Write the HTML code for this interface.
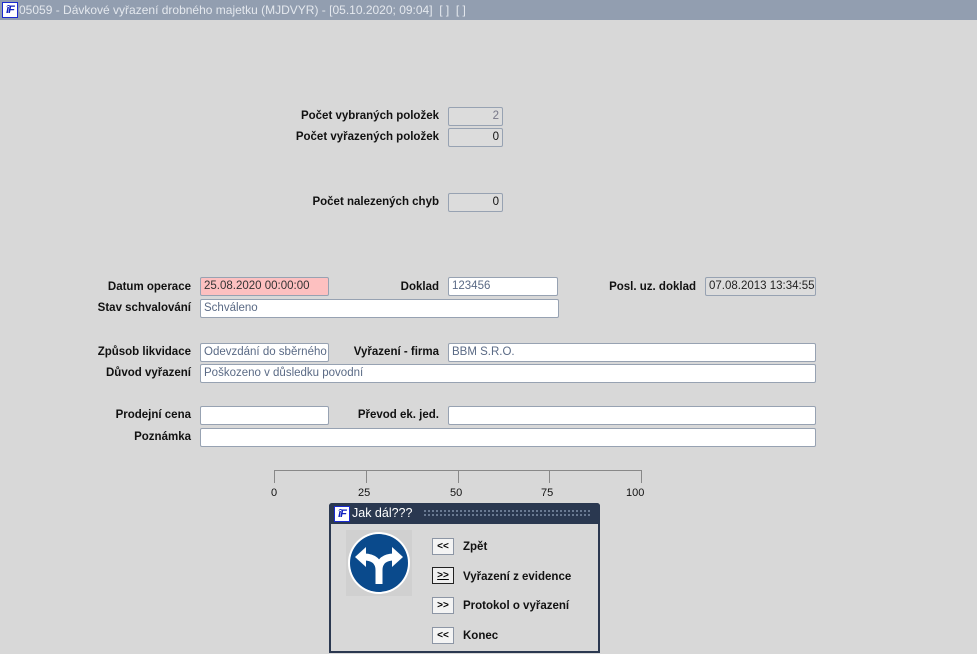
<!DOCTYPE html>
<html><head><meta charset="utf-8"><style>
body{margin:0;width:977px;height:654px;background:#d8d8d8;font-family:"Liberation Sans",Arial,sans-serif;position:relative;overflow:hidden}
.t{position:absolute;left:0;top:0;width:977px;height:20px;background:#929eb0;color:#e4e8ee;font-size:12px;line-height:20px}
.logo{position:absolute;width:14px;height:14px;background:#fff;border:1px solid #1a2ad0;color:#1020c0;font-weight:bold;font-style:italic;font-size:11px;line-height:14px;text-align:center;letter-spacing:-1px}
.l{position:absolute;font-size:11.5px;font-weight:bold;color:#111;text-align:right;line-height:18px}
.i{position:absolute;box-sizing:border-box;height:19px;border:1px solid #97a2b2;border-radius:2px;background:#fff;font-size:11.5px;line-height:17px;padding:0 3px;color:#5a6a85;white-space:nowrap;overflow:hidden}
.g{background:#dcdcdc;color:#111;text-align:right}
.n{position:absolute;font-size:11px;color:#111}
.b{position:absolute;left:432px;width:22px;height:17px;box-sizing:border-box;border:1px solid #8d96a5;background:#f4f4f4;font-size:10px;font-weight:bold;text-align:center;line-height:15px}
.bl{position:absolute;left:463px;font-size:11.5px;font-weight:bold;color:#111}
</style></head><body>
<div class="t"><div class="logo" style="left:2px;top:2px">îF</div><span style="position:absolute;left:19px">05059 - Dávkové vyřazení drobného majetku (MJDVYR) - [05.10.2020; 09:04]&nbsp; [ ]&nbsp; [ ]</span></div>

<div class="l" style="right:538px;top:107px">Počet vybraných položek</div>
<div class="i g" style="left:448px;top:107px;width:55px;color:#778">2</div>
<div class="l" style="right:538px;top:128px">Počet vyřazených položek</div>
<div class="i g" style="left:448px;top:128px;width:55px">0</div>
<div class="l" style="right:538px;top:193px">Počet nalezených chyb</div>
<div class="i g" style="left:448px;top:193px;width:55px">0</div>

<div class="l" style="right:786px;top:278px">Datum operace</div>
<div class="i" style="left:200px;top:277px;width:129px;background:#fdc0c0;color:#333">25.08.2020 00:00:00</div>
<div class="l" style="right:538px;top:278px">Doklad</div>
<div class="i" style="left:448px;top:277px;width:110px">123456</div>
<div class="l" style="right:281px;top:278px">Posl. uz. doklad</div>
<div class="i g" style="left:705px;top:277px;width:111px;text-align:left;color:#222">07.08.2013 13:34:55</div>
<div class="l" style="right:786px;top:299px">Stav schvalování</div>
<div class="i" style="left:200px;top:299px;width:359px">Schváleno</div>

<div class="l" style="right:786px;top:343px">Způsob likvidace</div>
<div class="i" style="left:200px;top:343px;width:129px">Odevzdání do sběrného d</div>
<div class="l" style="right:538px;top:343px">Vyřazení - firma</div>
<div class="i" style="left:448px;top:343px;width:368px">BBM S.R.O.</div>
<div class="l" style="right:786px;top:364px">Důvod vyřazení</div>
<div class="i" style="left:200px;top:364px;width:616px">Poškozeno v důsledku povodní</div>

<div class="l" style="right:786px;top:406px">Prodejní cena</div>
<div class="i" style="left:200px;top:406px;width:129px"></div>
<div class="l" style="right:538px;top:406px">Převod ek. jed.</div>
<div class="i" style="left:448px;top:406px;width:368px"></div>
<div class="l" style="right:786px;top:428px">Poznámka</div>
<div class="i" style="left:200px;top:428px;width:616px"></div>

<div style="position:absolute;left:274px;top:470px;width:368px;height:1px;background:#888"></div>
<div style="position:absolute;left:274px;top:470px;width:1px;height:13px;background:#888"></div>
<div style="position:absolute;left:366px;top:470px;width:1px;height:13px;background:#888"></div>
<div style="position:absolute;left:458px;top:470px;width:1px;height:13px;background:#888"></div>
<div style="position:absolute;left:549px;top:470px;width:1px;height:13px;background:#888"></div>
<div style="position:absolute;left:641px;top:470px;width:1px;height:13px;background:#888"></div>
<div class="n" style="left:271px;top:487px">0</div>
<div class="n" style="left:358px;top:487px">25</div>
<div class="n" style="left:450px;top:487px">50</div>
<div class="n" style="left:541px;top:487px">75</div>
<div class="n" style="left:626px;top:487px">100</div>

<div style="position:absolute;left:329px;top:503px;width:271px;height:150px;box-sizing:border-box;border:2px solid #2b3850;border-top:none;background:#d8d8d8;border-radius:3px 3px 0 0">
<div style="position:absolute;left:-2px;top:0;width:271px;height:21px;background:#2a3850;border-radius:3px 3px 0 0"></div>
<div class="logo" style="left:3px;top:3px">îF</div>
<div style="position:absolute;left:21px;top:3px;color:#fff;font-size:12.5px">Jak dál???</div>
<div style="position:absolute;left:92px;top:6px;width:168px;height:9px;background-image:radial-gradient(#8090a8 0.8px,transparent 1px);background-size:4px 4px"></div>
</div>
<svg style="position:absolute;left:346px;top:530px" width="66" height="66" viewBox="0 0 66 66">
<rect width="66" height="66" fill="#d0d0d0"/>
<circle cx="33" cy="33" r="31" fill="#fff"/><circle cx="33" cy="33" r="29" fill="#0a4a8c"/>
<path d="M33 54V40C33 32 28 27 18 27M33 40C33 32 38 27 48 27" stroke="#fff" stroke-width="7" fill="none"/>
<path d="M9 27L20 17V37z" fill="#fff"/><path d="M57 27L46 17V37z" fill="#fff"/>
</svg>
<div class="b" style="top:538px">&lt;&lt;</div><div class="bl" style="top:541px">Zpět</div>
<div class="b" style="top:567px;border:1px solid #222;background:#eee;text-decoration:underline">&gt;&gt;</div><div class="bl" style="top:571px">Vyřazení z evidence</div>
<div class="b" style="top:597px">&gt;&gt;</div><div class="bl" style="top:600px">Protokol o vyřazení</div>
<div class="b" style="top:627px">&lt;&lt;</div><div class="bl" style="top:630px">Konec</div>
</body></html>
